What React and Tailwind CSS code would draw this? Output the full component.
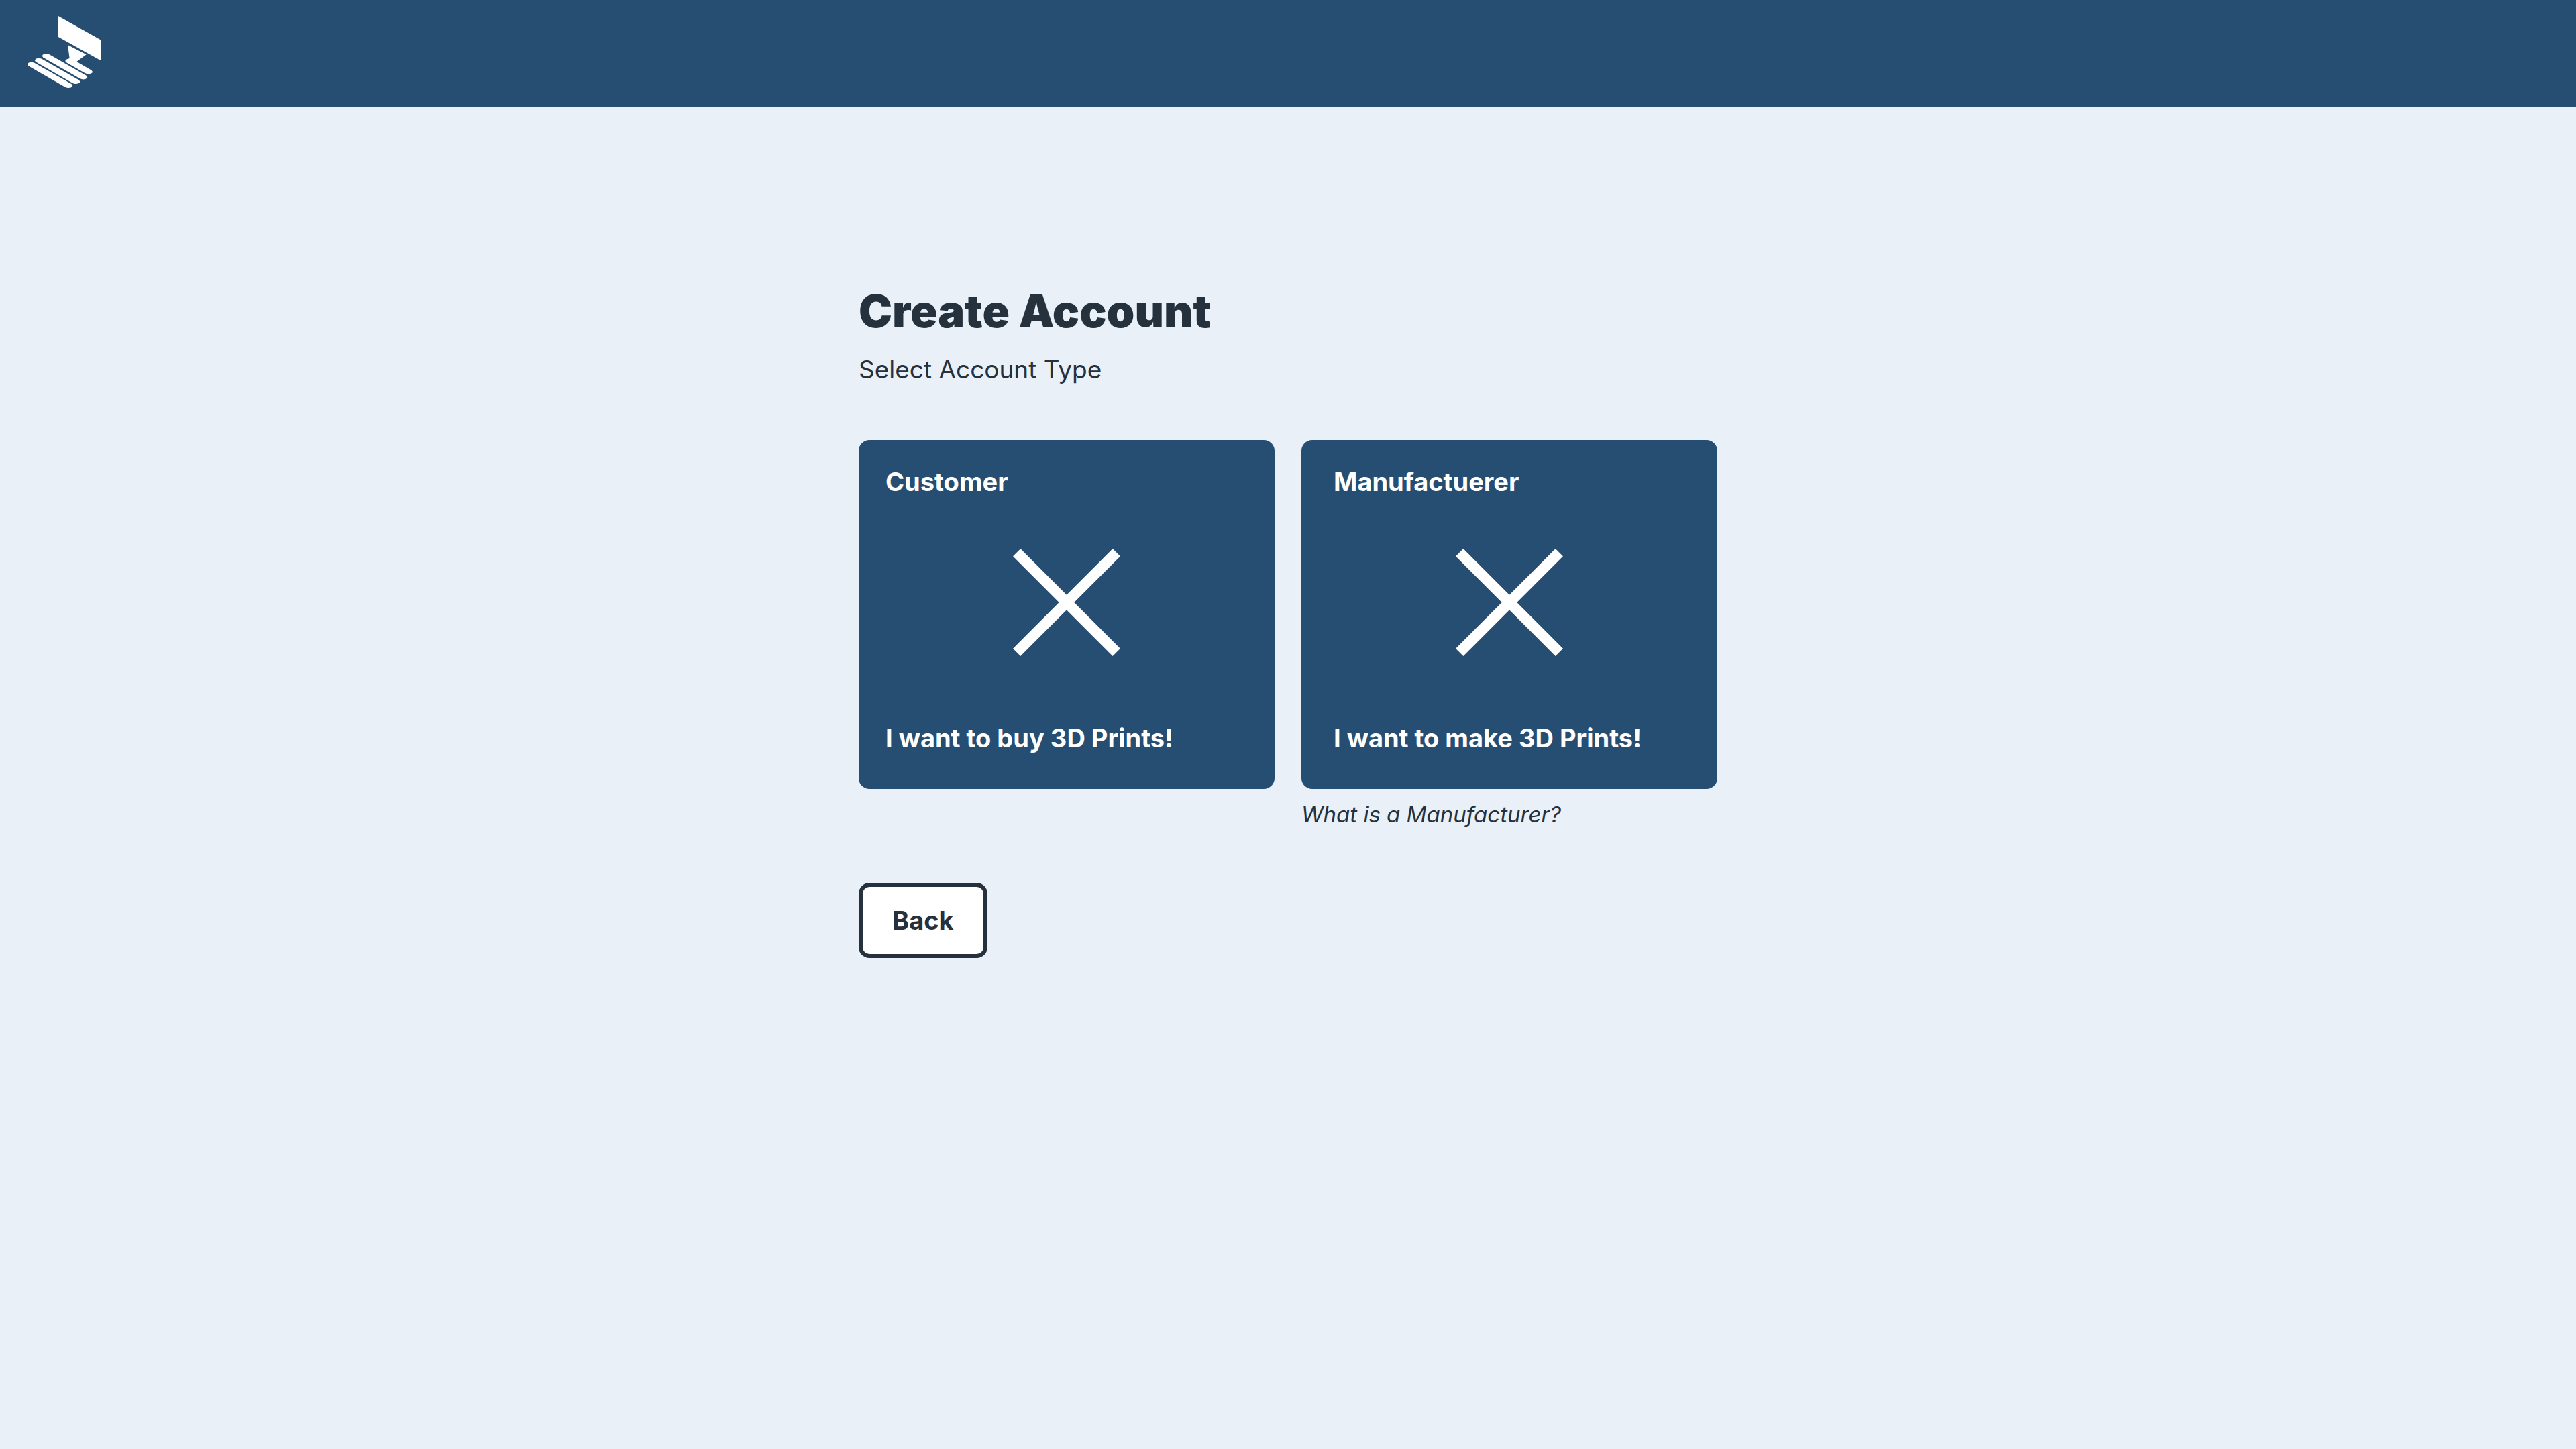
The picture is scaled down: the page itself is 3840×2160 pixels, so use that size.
function Logo() {
  const bar =
    "M221 244 L386 338 Q393 344 390 349 Q384 356 369 355 Q362 354 357 351 L193 257 Q187 252 190 247 Q195 240 208 240 Q216 241 221 244 Z";
  return (
    <svg viewBox="120 60 333 360" className="h-[120px] w-[111px]" fill="white" aria-hidden="true">
      <path d="M258 70.5 L450.5 178.5 V271 L258 163.5 Z" />
      <path d="M303 201 L386 244 L343 276 L409 314 Q416 320 413 325 Q407 332 393 331 Q386 330 380 327 L296 279 Q290 274 293 269 Q297 264 311 261 Z" />
      <path d={bar} />
      <path d={bar} transform="translate(-33 20)" />
      <path d={bar} transform="translate(-66 38)" />
    </svg>
  );
}

function CrossIcon() {
  return (
    <svg
      viewBox="0 0 160 160"
      className="mt-[78px] mb-[100px] size-40 self-center"
      stroke="white"
      strokeWidth="16"
      aria-hidden="true"
    >
      <path d="M5.7 5.7 L154.3 154.3 M154.3 5.7 L5.7 154.3" />
    </svg>
  );
}

function AccountCard({ title, text, padding }) {
  return (
    <button
      type="button"
      className={`flex w-full cursor-pointer flex-col items-start rounded-2xl bg-[#264e72] pt-10 pb-[54px] text-left text-[38px] leading-[44px] font-bold text-white ${padding}`}
    >
      <span>{title}</span>
      <CrossIcon />
      <span>{text}</span>
    </button>
  );
}

export default function App() {
  return (
    <div className="min-h-screen bg-[#e9f0f8] font-['Inter','Liberation_Sans',sans-serif] text-[#25313d]">
      <header className="flex h-40 items-center bg-[#264e72] px-10">
        <a href="#" aria-label="Home">
          <Logo />
        </a>
      </header>
      <main className="mx-auto max-w-[1280px] pt-[262px]">
        <h1 className="text-[67px] leading-[84px] font-black">Create Account</h1>
        <p className="mt-5 text-[37px] leading-[50px]">Select Account Type</p>
        <div className="mt-20 grid grid-cols-2 gap-10">
          <div>
            <AccountCard title="Customer" text="I want to buy 3D Prints!" padding="px-10" />
          </div>
          <div className="flex flex-col items-start">
            <AccountCard title="Manufactuerer" text="I want to make 3D Prints!" padding="px-12" />
            <a href="#" className="mt-4 text-[33px] leading-[44px] italic">
              What is a Manufacturer?
            </a>
          </div>
        </div>
        <button
          type="button"
          className="mt-20 cursor-pointer rounded-2xl border-6 border-[#25313d] bg-white px-11 py-7 text-[38px] leading-[44px] font-bold"
        >
          Back
        </button>
      </main>
    </div>
  );
}
